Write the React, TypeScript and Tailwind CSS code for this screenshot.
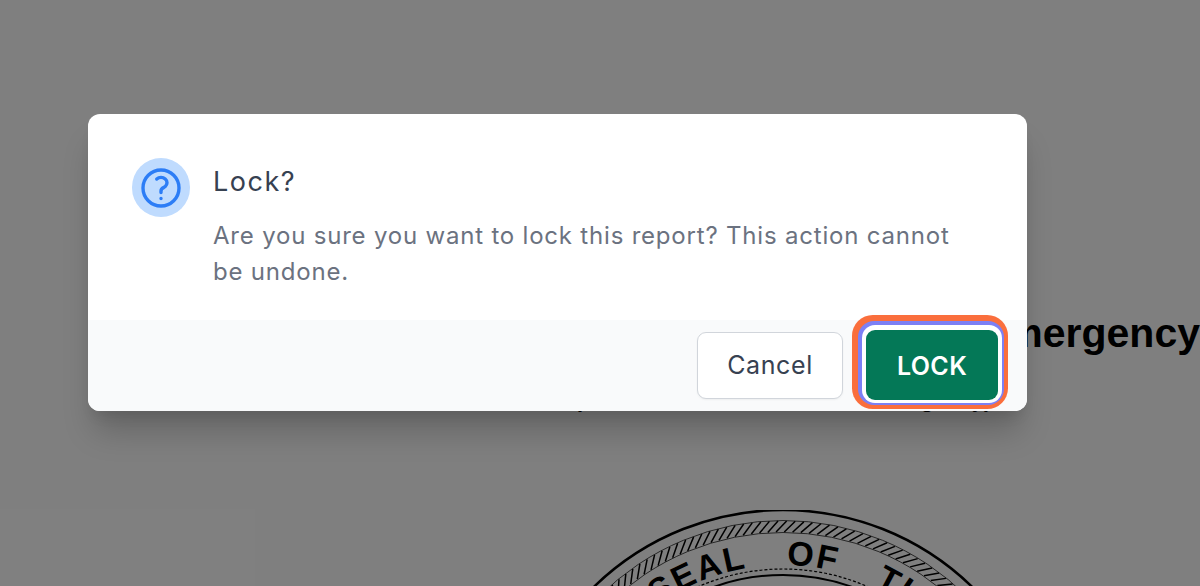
import { HiOutlineQuestionMarkCircle } from "react-icons/hi2";

const SEAL_CX = 300;
const SEAL_CY = 290;

// Twisted rope ring just inside the seal's outer line.
function ropeTicks() {
  const ticks = [];
  for (let deg = -70; deg <= 70; deg += 1.9) {
    const a = ((deg - 90) * Math.PI) / 180;
    const b = ((deg - 90 + 2.4) * Math.PI) / 180;
    ticks.push(
      <line
        key={deg}
        x1={SEAL_CX + 249 * Math.cos(a)}
        y1={SEAL_CY + 249 * Math.sin(a)}
        x2={SEAL_CX + 260 * Math.cos(b)}
        y2={SEAL_CY + 260 * Math.sin(b)}
        stroke="#000"
        strokeWidth="1.5"
      />
    );
  }
  return ticks;
}

function Seal() {
  return (
    <svg width="600" height="100" viewBox="0 19 600 100" className="shrink-0">
      <defs>
        <path id="seal-text" d="M 84 290 A 216 216 0 0 1 516 290" />
      </defs>
      <circle cx={SEAL_CX} cy={SEAL_CY} r="271" fill="none" stroke="#000" strokeWidth="2.5" />
      <circle cx={SEAL_CX} cy={SEAL_CY} r="260.5" fill="none" stroke="#000" strokeWidth="0.7" />
      <circle cx={SEAL_CX} cy={SEAL_CY} r="248.5" fill="none" stroke="#000" strokeWidth="0.7" />
      {ropeTicks()}
      <text
        fontFamily="Liberation Sans, sans-serif"
        fontWeight="700"
        fontSize="34"
        letterSpacing="2"
        wordSpacing="28"
        fill="#000"
      >
        <textPath href="#seal-text" startOffset="205">
          SEAL OF THE
        </textPath>
      </text>
      <circle cx={SEAL_CX} cy={SEAL_CY} r="212" fill="none" stroke="#000" strokeWidth="1.2" strokeDasharray="3 2" />
      <circle cx={SEAL_CX} cy={SEAL_CY} r="206" fill="none" stroke="#000" strokeWidth="2" />
    </svg>
  );
}

export default function App() {
  return (
    <div className="relative h-[586px] w-[1200px] overflow-hidden bg-white font-['Inter',sans-serif]">
      {/* report page underneath the dialog */}
      <div className="flex h-full flex-col items-center overflow-hidden pl-[366px] pt-[305px] font-['Liberation_Sans',sans-serif] font-bold text-black">
        <h1 className="self-end text-[41px] leading-[56px] whitespace-nowrap">Emergency</h1>
        <p className="mt-[23px] text-[22px] leading-[32px] whitespace-nowrap">(Public Health Commission Emergency)</p>
        <div className="mt-[94px]">
          <Seal />
        </div>
      </div>

      {/* dim layer and dialog */}
      <div className="absolute inset-0 bg-black/50 pl-[88px] pt-[114px]">
        <div className="flex h-[297px] w-[939px] flex-col overflow-hidden rounded-[12px] bg-white shadow-[0_26px_32px_-6px_rgba(0,0,0,0.2),0_10px_14px_-6px_rgba(0,0,0,0.1)]">
          <div className="flex flex-1 gap-[23px] pl-[44px] pr-[64px] pt-[44px]">
            <div className="flex h-[59px] w-[58px] shrink-0 items-center justify-center rounded-full bg-[#bfdbfe]">
              <HiOutlineQuestionMarkCircle strokeWidth={1.7} className="h-[48px] w-[48px] text-[#2c7df6]" />
            </div>
            <div className="min-w-0">
              <h2 className="mt-[1px] text-[27px] leading-[46px] tracking-[1.5px] text-[#374151]">Lock?</h2>
              <p className="mt-[13px] text-[24px] leading-[36px] tracking-[0.8px] text-[#6b7280]">
                Are you sure you want to lock this report? This action cannot be undone.
              </p>
            </div>
          </div>
          <div className="flex h-[91px] items-start justify-end gap-[23px] bg-[#f9fafb] pr-[29px] pt-[10px]">
            <button
              type="button"
              className="mt-[2px] h-[67px] w-[146px] rounded-[9px] border border-[#d1d5db] bg-white pt-[1px] text-[25px] tracking-[0.6px] text-[#374151] shadow-[0_1px_2px_rgba(0,0,0,0.05)]"
            >
              Cancel
            </button>
            <button
              type="button"
              className="h-[70px] w-[132px] rounded-[9px] bg-[#047857] pt-[3px] text-[25px] font-semibold tracking-[0.4px] text-white shadow-[0_-1px_0_4px_#ffffff,-1px_-2px_0_7px_#7c80f5,-2px_-3px_0_12px_#fa6e3c]"
            >
              LOCK
            </button>
          </div>
        </div>
      </div>
    </div>
  );
}
